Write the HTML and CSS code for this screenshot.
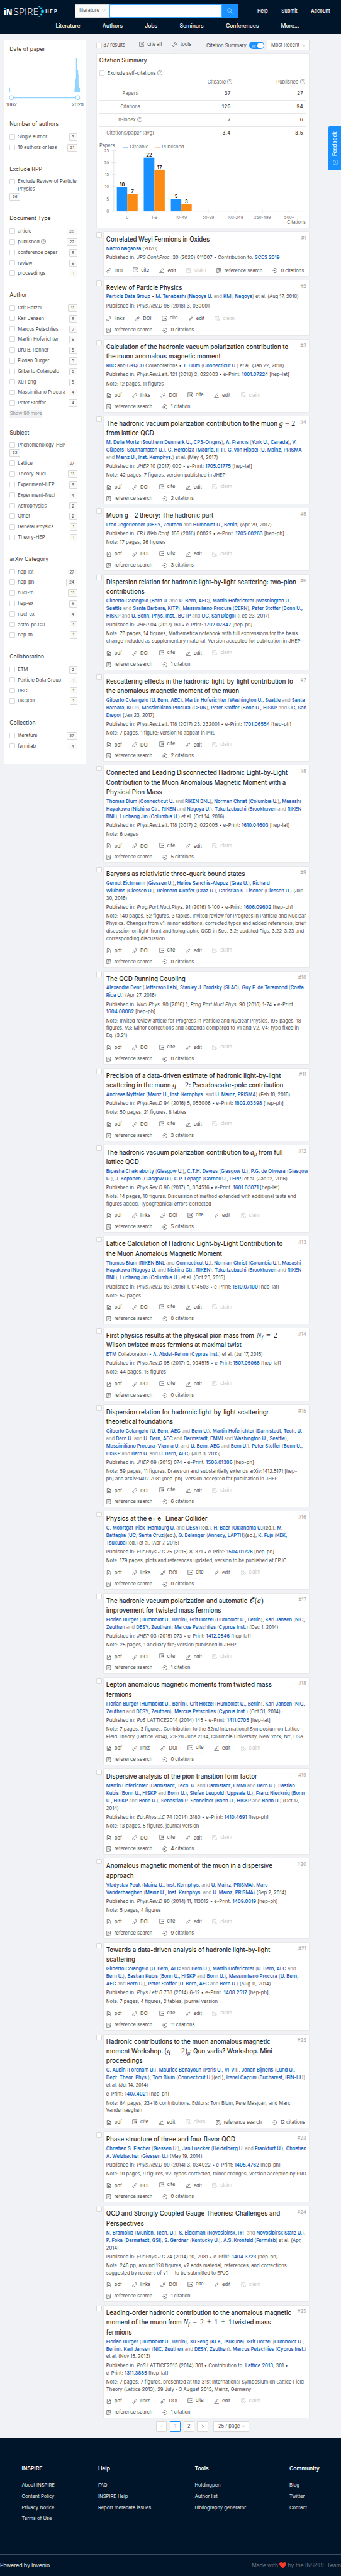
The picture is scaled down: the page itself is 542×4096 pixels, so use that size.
FILE: index.html
```html
<!DOCTYPE html>
<html lang="en">
<head>
<meta charset="utf-8">
<title>Literature Search - INSPIRE</title>
<link rel="stylesheet" href="styles.css">
</head>
<body>
<svg class="sprite" aria-hidden="true">
  <symbol id="i-pdf" viewBox="0 0 16 16"><path d="M2.5 1h7l4 4v10h-11zM9.5 1v4h4M5 12c2-1 3-3.500 3-5.500M8 8c.5 2 1.500 2.800 3.200 2.900M5 12c1.500-1.600 4-2 6.200-1.300"/></symbol>
  <symbol id="i-link" viewBox="0 0 16 16"><path d="M7 4.800l2.600-2.600a2.900 2.900 0 0 1 4.100 4.100L11 9M9 11.200l-2.600 2.600a2.900 2.900 0 0 1-4.100-4.100L5 7M5.700 10.300l4.600-4.600"/></symbol>
  <symbol id="i-cite" viewBox="0 0 16 16"><path d="M14.500 4V1.500H1.500v13h13V12M6 8h6"/><path class="solid" d="M11.500 5.800L15 8l-3.500 2.200z"/></symbol>
  <symbol id="i-edit" viewBox="0 0 16 16"><path d="M.5 15h15M4 9l7.500-7.500 2.500 2.500L6.500 11.500 3.300 12z"/></symbol>
  <symbol id="i-claim" viewBox="0 0 16 16"><path d="M7.500 15h-6V1h11.500v6M4 4.500h6.500M4 7.500h3.500"/><circle cx="11.500" cy="11.800" r="3.200"/><path d="M10 11.800l1.200 1.200 2-2.300"/></symbol>
  <symbol id="i-ref" viewBox="0 0 16 16"><path d="M7.500 15h-6V1h11.500v6M4 4.500h6.500M4 7.500h3.500M13 13.200l2 2"/><circle cx="11" cy="11" r="2.800"/></symbol>
  <symbol id="i-cits" viewBox="0 0 16 16"><path d="M3 3.500a6.800 6.800 0 1 1 0 9M0 8h7"/><path class="solid" d="M6.500 5.800L9.500 8l-3 2.200z"/></symbol>
  <symbol id="i-tool" viewBox="0 0 16 16"><path d="M14.500 4.200a4.200 4.200 0 0 1-5.700 5L4 14.300a1.600 1.600 0 0 1-2.300-2.300L6.800 7.200a4.200 4.200 0 0 1 5-5.700L9.600 3.800l.4 2.200 2.200.4z"/></symbol>
  <symbol id="i-help" viewBox="0 0 16 16"><circle cx="8" cy="8" r="7.300"/><path d="M5.800 6.300a2.200 2.200 0 1 1 3.300 1.900c-.8.500-1.100.8-1.100 1.600"/><circle class="solid" cx="8" cy="11.800" r=".7"/></symbol>
  <symbol id="i-down" viewBox="0 0 16 16"><path d="M2 3l6 9 6-9"/></symbol>
</svg>

<div class="page">
  <header class="header">
    <div class="header-top">
      <svg class="logo" width="160" height="54" viewBox="0 0 160 54">
        <text class="logo-bold" x="0" y="38" textLength="25" lengthAdjust="spacingAndGlyphs">ıN</text>
        <text class="logo-thin" x="28" y="38" textLength="74" lengthAdjust="spacingAndGlyphs">SPIRE</text>
        <g fill="#27d3f5" stroke="none"><circle cx="3.300" cy="20" r="2.300"/><circle cx="103.500" cy="14" r="1.600"/><circle cx="109.500" cy="18.500" r="2.700"/><circle cx="113.500" cy="27.500" r="4.500"/><circle cx="109.500" cy="37" r="2.700"/><circle cx="103.500" cy="42.500" r="1.600"/></g>
        <text class="logo-hep" x="122" y="32.500" textLength="34">HEP</text>
      </svg>
      <div class="search">
        <div class="search-scope">literature <svg class="caret"><use href="#i-down"/></svg></div>
        <div class="search-input"></div>
        <div class="search-button"><svg width="16" height="16" viewBox="0 0 16 16"><circle cx="6.500" cy="6.500" r="5.300"/><path d="M10.500 10.500l5 5"/></svg></div>
      </div>
      <nav class="user-nav"><span>Help</span><span>Submit</span><span>Account</span></nav>
    </div>
    <nav class="main-nav"><span class="active">Literature</span><span>Authors</span><span>Jobs</span><span>Seminars</span><span>Conferences</span><span>More...</span></nav>
  </header>

  <main class="content">
    <aside class="sidebar">
      <section class="facet facet-date">
        <h3>Date of paper</h3>
        <svg width="210" height="140" viewBox="0 0 210 140">
          <g fill="#91d5ff" stroke="none"><path d="M0 88h2v12.500H0zM191 88h2.500V62h1.500V0h4v37h2.500v12h1v26h2v13h2v12.500h-16z"/><rect x="6" y="114.500" width="194" height="4"/></g>
          <g fill="#fff" stroke="#91d5ff" stroke-width="2"><circle cx="6" cy="116.500" r="6"/><circle cx="200" cy="116.500" r="6"/></g>
          <g class="svg-text" text-anchor="middle"><text x="6" y="141.500">1862</text><text x="200" y="141.500">2020</text></g>
        </svg>
      </section>
      <div id="facets"></div>
    </aside>

    <div class="results">
      <div class="toolbar">
        <i class="box"></i><span class="count">37 results</span><i class="bar"></i>
        <span class="tool under cite-all"><svg class="icon"><use href="#i-cite"/></svg>cite all</span>
        <span class="tool under tools"><svg class="icon"><use href="#i-tool"/></svg>tools</span>
        <span class="summary-label">Citation Summary</span>
        <span class="switch"><svg width="12" height="12" viewBox="0 0 12 12"><path d="M.5 0v11H12M3 9.500V6M5.500 9.500V3.500M8 9.500V5M10.500 9.500V2"/></svg><i></i></span>
        <span class="sort">Most Recent <svg class="caret"><use href="#i-down"/></svg></span>
      </div>

      <section class="summary">
        <h2>Citation Summary</h2>
        <div class="exclude"><i class="box"></i>Exclude self-citations<svg class="help"><use href="#i-help"/></svg></div>
        <table class="stats">
          <tr class="stats-head"><td class="first"></td><td>Citeable<svg class="help"><use href="#i-help"/></svg></td><td>Published<svg class="help"><use href="#i-help"/></svg></td></tr>
          <tr><th>Papers</th><td>37</td><td>27</td></tr>
          <tr><th>Citations</th><td>126</td><td>94</td></tr>
          <tr><th>h-index<svg class="help"><use href="#i-help"/></svg></th><td>7</td><td>6</td></tr>
          <tr><th>Citations/paper (avg)</th><td>3.4</td><td>3.5</td></tr>
        </table>
        <svg class="chart" width="607" height="250" viewBox="291 412 607 250">
          <g stroke="#e6e6e9" stroke-width="2" fill="none"><path d="M333 440v180H887M327 442h12M327 477.700h12M327 513h12M327 548.500h12M327 584h12M327 620h12M372.500 614v12M451.700 614v12M531 614v12M610 614v12M689 614v12M768.500 614v12M847.500 614v12"/></g>
          <g fill="#1890ff" stroke="none"><rect x="342" y="548.500" width="30.500" height="72"/><rect x="421" y="463" width="31" height="157.500"/><rect x="500.500" y="584" width="30.500" height="36.500"/><rect x="361" y="431" width="14" height="2"/></g>
          <g fill="#fa8c16" stroke="none"><rect x="372.500" y="569.500" width="30.500" height="51"/><rect x="452" y="498.500" width="30.500" height="122"/><rect x="531" y="598.500" width="30.500" height="22"/><rect x="455" y="431" width="14" height="2"/></g>
          <g class="chart-label"><text x="291" y="432" textLength="45">Papers</text><text x="380" y="436" textLength="55">Citeable</text><text x="474" y="436" textLength="65">Published</text><text x="841" y="657" textLength="55">Citations</text></g>
          <g class="chart-tick" text-anchor="end"><text x="319" y="446.500">25</text><text x="319" y="482">20</text><text x="319" y="517.500">15</text><text x="319" y="553">10</text><text x="319" y="588.500">5</text><text x="319" y="624.500">0</text></g>
          <g class="chart-tick" text-anchor="middle"><text x="372.500" y="642.500">0</text><text x="452" y="642.500">1-9</text><text x="531" y="642.500">10-49</text><text x="610" y="642.500">50-99</text><text x="689" y="642.500">100-249</text><text x="768.500" y="642.500">250-499</text><text x="847.500" y="642.500">500+</text></g>
          <g class="chart-value" text-anchor="middle"><text x="358" y="546">10</text><text x="388" y="567.500">7</text><text x="436.500" y="460.500">22</text><text x="467" y="496.500">17</text><text x="516" y="581.500">5</text><text x="546" y="596.500">3</text></g>
        </svg>
      </section>

      <div id="list"></div>

      <div class="pager">
        <span class="off"><svg class="arrow" viewBox="0 0 16 16"><path d="M11 2L5 8l6 6"/></svg></span><span class="on">1</span><span>2</span><span><svg class="arrow" viewBox="0 0 16 16"><path d="M5 2l6 6-6 6"/></svg></span>
        <span class="size">25 / page <svg class="caret"><use href="#i-down"/></svg></span>
      </div>
    </div>
  </main>

  <footer class="footer">
    <div class="footer-cols">
      <div><h4>INSPIRE</h4><p>About INSPIRE</p><p>Content Policy</p><p>Privacy Notice</p><p>Terms of Use</p></div>
      <div><h4>Help</h4><p>FAQ</p><p>INSPIRE Help</p><p>Report metadata issues</p></div>
      <div><h4>Tools</h4><p>Holdingpen</p><p>Author list</p><p>Bibliography generator</p></div>
      <div><h4>Community</h4><p>Blog</p><p>Twitter</p><p>Contact</p></div>
    </div>
    <div class="footer-end"><span>Powered by Invenio</span><span class="made">Made with <svg class="heart" viewBox="0 0 20 18"><path d="M10 18C4 13 0 9.500 0 5.200 0 2 2.300 0 5 0c2 0 4 1.200 5 3 1-1.800 3-3 5-3 2.700 0 5 2 5 5.200C20 9.500 16 13 10 18z"/></svg> by the INSPIRE Team</span></div>
  </footer>

  <div class="feedback"><span>Feedback</span><svg width="16" height="16" viewBox="0 0 16 16"><path d="M14.800 15V8A6.900 6.900 0 1 0 8 14.800z"/><g class="solid"><circle cx="4.800" cy="8" r=".8"/><circle cx="8" cy="8" r=".8"/><circle cx="11.200" cy="8" r=".8"/></g></svg></div>
</div>
<script src="app.js"></script>
</body>
</html>
```

FILE: styles.css
```css
* { box-sizing: border-box; }
body { margin: 0; background: #f0f2f5; }
.sprite { display: none; }
.page {
  zoom: 0.54237;
  position: relative;
  width: 100%;
  height: 7552px;
  overflow: hidden;
  font: 14px/22px Inter, "Liberation Sans", sans-serif;
  color: rgba(0, 0, 0, 0.78);
  display: flex;
  flex-direction: column;
}
h2, h3, h4, p { margin: 0; font-weight: 500; }
svg { fill: none; stroke: currentColor; flex: none; }
svg text { stroke: none; }
.solid { fill: currentColor; stroke: none; }
.box { display: block; flex: none; width: 16px; height: 16px; border: 1px solid #d9d9d9; border-radius: 2px; background: #fff; }
.caret { width: 11px; height: 11px; color: #b0b0b0; stroke-width: 1.5; }
svg.help { width: 15px; height: 15px; margin-left: 4px; color: #555; vertical-align: -2px; }

/* header */
.header { height: 100px; background: #001529; color: #fff; flex: none; }
.header-top { display: flex; height: 64px; align-items: center; padding: 0 32px 0 11px; }
.logo { overflow: visible; }
.logo text { fill: #fff; font-family: "Open Sans", sans-serif; font-size: 27px; }
.logo .logo-bold { font-weight: 800; }
.logo .logo-thin { font-weight: 300; }
.logo .logo-hep { font-family: Inter, sans-serif; font-size: 13px; font-weight: 700; }
.search { display: flex; margin-left: 48px; height: 40px; width: 479px; }
.search-scope { width: 102px; padding: 0 10px 0 12px; background: #fafafa; border: 1px solid #d9d9d9; color: #555; display: flex; align-items: center; justify-content: space-between; border-radius: 2px 0 0 2px; }
.search-input { width: 330px; background: #fff; border: 1px solid #40a9ff; box-shadow: 0 0 0 2px rgba(24, 144, 255, 0.2); }
.search-button { width: 47px; background: #1890ff; display: flex; align-items: center; justify-content: center; }
.user-nav { display: flex; margin-left: auto; gap: 40px; padding-top: 2px; font-weight: 500; }
.main-nav { display: flex; gap: 65px; padding: 2px 0 0 163px; font-size: 16px; font-weight: 500; letter-spacing: -0.12px; }
.main-nav span { height: 23px; }
.main-nav .active { border-bottom: 2px solid #fff; }

/* layout */
.content { display: flex; height: 7046px; flex: none; }
.sidebar { width: 238px; height: 2124px; margin: 16px 32px 0 12px; padding: 16px 16px 0; background: #fff; flex: none; }
.results { width: 625px; padding-top: 16px; flex: none; }

/* facets */
.facet { padding-bottom: 36px; }
.facet h3 { font-size: 16px; line-height: 25px; font-weight: 400; letter-spacing: 0.1px; color: rgba(0, 0, 0, 0.85); margin-bottom: 8.600px; }
.facet-date { height: 221px; }
.facet-date svg { overflow: visible; display: block; margin-top: 12px; }
.svg-text text { fill: rgba(0, 0, 0, 0.78); }
.facet-row { display: flex; height: 31px; padding: 4.500px 8px 0 0; justify-content: space-between; align-items: flex-start; white-space: nowrap; letter-spacing: -0.07px; }
.facet-row .box { margin: 2px 8px 0 0; }
.option { display: flex; }
.facet-row.stacked { flex-direction: column; justify-content: flex-start; height: auto; padding-bottom: 5px; }
.tag { border: 1px solid #d9d9d9; border-radius: 2px; background: #fafafa; font-size: 12px; line-height: 18.500px; padding: 0 6.500px; height: 22px; letter-spacing: 0; }
.more { display: block; width: 96px; margin: 5px 0 -4px; background: #f0f2f5; color: rgba(0, 0, 0, 0.45); text-align: center; border-radius: 2px; letter-spacing: -0.2px; white-space: nowrap; }

/* toolbar */
.toolbar { display: flex; align-items: center; height: 32px; margin-bottom: 9px; white-space: nowrap; }
.toolbar > .box { margin-top: 3px; }
.count { margin-left: 5px; width: 80px; padding-top: 3px; letter-spacing: -0.1px; }
.bar { width: 1px; height: 13px; margin-top: 3px; background: #444; }
.tool { display: flex; align-items: center; gap: 9px; height: 34px; padding-bottom: 2px; }
.under { border-bottom: 1px solid #ebedf0; }
.cite-all { margin-left: 24px; width: 66px; }
.tools { margin-left: 31px; width: 56px; }
.summary-label { margin-left: 44px; width: 126px; padding-top: 5px; }
.switch { width: 44px; height: 22px; margin-top: 3px; border-radius: 11px; background: #1890ff; color: #fff; display: flex; align-items: center; justify-content: space-between; padding: 0 2px 0 7px; }
.switch i { width: 18px; height: 18px; border-radius: 9px; background: #fff; }
.sort { margin-left: auto; width: 125px; height: 32px; border: 1px solid #d9d9d9; background: #fff; border-radius: 2px; padding: 0 10px 0 11px; display: flex; align-items: center; justify-content: space-between; }
.icon { width: 15px; height: 15px; stroke-width: 1.2; }

/* citation summary */
.summary { height: 512px; background: #fff; border: 1px solid #e8e8e8; border-radius: 2px; padding: 6px 7px; overflow: hidden; }
.summary h2 { font-size: 16px; line-height: 28px; letter-spacing: 0.25px; color: rgba(0, 0, 0, 0.85); }
.exclude { display: flex; align-items: center; margin-top: 11px; }
.exclude .box { margin-right: 8px; }
.stats { width: 607px; border-collapse: collapse; table-layout: fixed; margin-top: 1px; color: rgba(0, 0, 0, 0.65); }
.stats td, .stats th { height: 39px; padding: 0 9px 0 0; border-bottom: 1px solid #e6e6e9; text-align: right; }
.stats tr:last-child > * { border: 0; }
.stats .first { width: 182px; }
.stats th { width: 182px; text-align: center; padding: 0; font-weight: 400; }
.stats td { font-weight: 600; letter-spacing: 0.7px; color: rgba(0, 0, 0, 0.75); }
.stats .stats-head td { height: 28px; border: 0; padding-right: 4px; font-weight: 400; letter-spacing: 0; color: rgba(0, 0, 0, 0.65); }
.chart { display: block; }
.chart-label text { fill: rgba(0, 0, 0, 0.65); }
.chart-tick text { fill: rgba(0, 0, 0, 0.65); font-size: 11.700px; }
.chart-value text { fill: #000; font-size: 13.500px; font-weight: 600; }

/* result cards */
.result { display: flex; margin-top: 9.400px; }
.result > .box { margin: 2.500px 4.500px 0 0; }
.card { width: 604px; background: #fff; border: 1px solid #e8e8e8; border-radius: 2px; padding: 7.200px 7px 0; white-space: nowrap; letter-spacing: 0.05px; }
.head { display: flex; justify-content: space-between; }
.title { font-size: 18px; line-height: 28.280px; font-weight: 500; letter-spacing: -0.11px; color: rgba(0, 0, 0, 0.88); }
.number { color: #aaa; font-weight: 500; }
.line { margin-top: 4px; }
.published { letter-spacing: 0.085px; }
.authors { margin-top: 3px; letter-spacing: -0.04px; }
.card a { color: #0050b3; font-weight: 500; }
.dim { color: rgba(0, 0, 0, 0.5); }
.math { display: inline-block; font: 22px/20px "Liberation Serif", serif; letter-spacing: 0; word-spacing: 1px; text-align: center; white-space: nowrap; }
.math.wide { word-spacing: 3.500px; }
.math sub { font-size: 16px; line-height: 0; vertical-align: -4px; }
.script { margin-right: 2px; font-size: 20px; }
.actions { margin: 6.700px 0 -1.700px; letter-spacing: -0.07px; }
.actions.loose { margin-top: 10.700px; }
.row { display: flex; gap: 30px; height: 32.900px; align-items: center; }
.act { display: flex; gap: 9px; align-items: center; }
.act.cite { height: 32.500px; padding-bottom: 2px; border-bottom: 1px solid #fafafa; }
.act.claim { color: #c2c2c2; padding-bottom: 2px; }

/* pagination */
.pager { display: flex; gap: 8.500px; margin: 9px 0 0 176px; }
.pager span { width: 31.500px; height: 32px; border: 1px solid #d9d9d9; border-radius: 2px; background: #fff; display: flex; align-items: center; justify-content: center; white-space: nowrap; }
.pager .on { border-color: #1890ff; color: #1890ff; font-weight: 500; }
.pager .off { color: #bbb; }
.pager .size { width: 105px; margin-left: 8px; justify-content: space-between; padding: 0 10px 0 12px; }
.arrow { width: 12px; height: 12px; stroke-width: 1.500px; }

/* footer */
.footer { flex: 1; background: #001529; color: #e6e8ea; }
.footer-cols { display: grid; grid-template-columns: 224px 283px 277.500px 1fr; padding: 80px 0 0 63.500px; height: 341px; white-space: nowrap; }
.footer-cols h4 { font-size: 16px; line-height: 25px; margin-bottom: 24px; color: #fff; font-weight: 600; letter-spacing: -0.12px; }
.footer-cols p { height: 33px; font-weight: 400; }
.footer-end { border-top: 1px solid #3c4c5e; display: flex; justify-content: space-between; padding-top: 22px; font-size: 16px; letter-spacing: -0.13px; }
.made { color: #66737f; }
.heart { width: 20px; height: 18px; vertical-align: -3px; stroke: none; fill: #f5392a; }

.feedback { position: absolute; right: 0; top: 370px; width: 36px; height: 130px; background: #1890ff; color: #fff; border-radius: 3px 0 0 3px; display: flex; flex-direction: column; align-items: center; justify-content: space-between; padding: 15px 0 16px 4px; }
.feedback span { writing-mode: vertical-rl; transform: rotate(180deg); font-size: 15.500px; font-weight: 500; }
.feedback svg { transform: rotate(-90deg); }
```

FILE: app.js
```js
// Facets: [title, rows, "show more" label]; a row is [label, count, option]
const facets = [
  ['Number of authors', [['Single author', 3], ['10 authors or less', 31]]],
  ['Exclude RPP', [['Exclude Review of Particle<br>Physics', 36, 'stacked']]],
  ['Document Type', [['article', 28], ['published', 27, 'hint'], ['conference paper', 8], ['review', 6], ['proceedings', 1]]],
  ['Author', [['Grit Hotzel', 11], ['Karl Jansen', 8], ['Marcus Petschlies', 7], ['Martin Hoferichter', 6], ['Dru B. Renner', 5], ['Florian Burger', 5], ['Gilberto Colangelo', 5], ['Xu Feng', 5], ['Massimiliano Procura', 4], ['Peter Stoffer', 4]], 'Show 90 more'],
  ['Subject', [['Phenomenology-HEP', 33, 'stacked'], ['Lattice', 27], ['Theory-Nucl', 11], ['Experiment-HEP', 9], ['Experiment-Nucl', 4], ['Astrophysics', 2], ['Other', 2], ['General Physics', 1], ['Theory-HEP', 1]]],
  ['arXiv Category', [['hep-lat', 27], ['hep-ph', 24], ['nucl-th', 11], ['hep-ex', 8], ['nucl-ex', 4], ['astro-ph.CO', 1], ['hep-th', 1]]],
  ['Collaboration', [['ETM', 2], ['Particle Data Group', 1], ['RBC', 1], ['UKQCD', 1]]],
  ['Collection', [['literature', 37], ['fermilab', 4]]]
];

const icon = (name, cls = 'icon') => `<svg class="${cls}"><use href="#i-${name}"/></svg>`;

document.getElementById('facets').innerHTML = facets.map(([title, rows, more]) => `
  <section class="facet"><h3>${title}</h3>
  ${rows.map(([label, n, opt]) => `<div class="facet-row ${opt || ''}"><span class="option"><i class="box"></i><span>${label}${opt === 'hint' ? icon('help', 'help') : ''}</span></span><span class="tag">${n}</span></div>`).join('')}
  ${more ? `<span class="more">${more}</span>` : ''}</section>`).join('');

const math = (width, html, cls = '') => `<span class="math ${cls}" style="width:${width}px">${html}</span>`;

// Papers: [title, authors, publication, note, actions, citations, actions on one row]
// "|" breaks a line, *x* is a link, ~x~ is a journal name
const papers = [
  ['Correlated Weyl Fermions in Oxides', '*Naoto Nagaosa* (2020)', 'Published in: ~JPS Conf.Proc.~ 30 (2020) 011007 • Contribution to: *SCES 2019*', '', 'D', '0 citations', 1],
  ['Review of Particle Physics', '*Particle Data Group* • *M. Tanabashi* (*Nagoya U.* and *KMI, Nagoya*) et al. (Aug 17, 2018)', 'Published in: ~Phys.Rev.D~ 98 (2018) 3, 030001', '', 'LD', '0 citations'],
  ['Calculation of the hadronic vacuum polarization contribution to|the muon anomalous magnetic moment', '*RBC* {and} *UKQCD* Collaborations • *T. Blum* (*Connecticut U.*) et al. (Jan 22, 2018)', 'Published in: ~Phys.Rev.Lett.~ 121 (2018) 2, 022003 • e-Print: *1801.07224* [hep-lat]', '12 pages, 11 figures', 'PLD', '1 citation'],
  ['The hadronic vacuum polarization contribution to the muon ' + math(47, '<i>g</i> − 2') + '|from lattice QCD', '*M. Della Morte* (*Southern Denmark U., CP3-Origins*), *A. Francis* (*York U., Canada*), *V.|Gülpers* (*Southampton U.*), *G. Herdoíza* (*Madrid, IFT*), *G. von Hippel* (*U. Mainz, PRISMA*|and *Mainz U., Inst. Kernphys.*) et al. (May 4, 2017)', 'Published in: ~JHEP~ 10 (2017) 020 • e-Print: *1705.01775* [hep-lat]', '42 pages, 7 figures, version published in JHEP', 'PD', '2 citations'],
  ['Muon g – 2 theory: The hadronic part', '*Fred Jegerlehner* (*DESY, Zeuthen* and *Humboldt U., Berlin*) (Apr 29, 2017)', 'Published in: ~EPJ Web Conf.~ 166 (2018) 00022 • e-Print: *1705.00263* [hep-ph]', '17 pages, 26 figures', 'PD', '3 citations'],
  ['Dispersion relation for hadronic light-by-light scattering: two-pion|contributions', '*Gilberto Colangelo* (*Bern U.* and *U. Bern, AEC*), *Martin Hoferichter* (*Washington U.,|Seattle* and *Santa Barbara, KITP*), *Massimiliano Procura* (*CERN*), *Peter Stoffer* (*Bonn U.,|HISKP* and *U. Bonn, Phys. Inst., BCTP* and *UC, San Diego*) (Feb 23, 2017)', 'Published in: ~JHEP~ 04 (2017) 161 • e-Print: *1702.07347* [hep-ph]', '70 pages, 14 figures, Mathematica notebook with full expressions for the basis|change included as supplementary material. Version accepted for publication in JHEP', 'PD', '1 citation'],
  ['Rescattering effects in the hadronic-light-by-light contribution to|the anomalous magnetic moment of the muon', '*Gilberto Colangelo* (*U. Bern, AEC*), *Martin Hoferichter* (*Washington U., Seattle* and *Santa|Barbara, KITP*), *Massimiliano Procura* (*CERN*), *Peter Stoffer* (*Bonn U., HISKP* and *UC, San|Diego*) (Jan 23, 2017)', 'Published in: ~Phys.Rev.Lett.~ 118 (2017) 23, 232001 • e-Print: *1701.06554* [hep-ph]', '7 pages, 1 figure; version to appear in PRL', 'PD', '2 citations'],
  ['Connected and Leading Disconnected Hadronic Light-by-Light|Contribution to the Muon Anomalous Magnetic Moment with a|Physical Pion Mass', '*Thomas Blum* (*Connecticut U.* and *RIKEN BNL*), *Norman Christ* (*Columbia U.*), *Masashi|Hayakawa* (*Nishina Ctr., RIKEN* and *Nagoya U.*), *Taku Izubuchi* (*Brookhaven* and *RIKEN|BNL*), *Luchang Jin* (*Columbia U.*) et al. (Oct 14, 2016)', 'Published in: ~Phys.Rev.Lett.~ 118 (2017) 2, 022005 • e-Print: *1610.04603* [hep-lat]', '6 pages', 'PD', '5 citations'],
  ['Baryons as relativistic three-quark bound states', '*Gernot Eichmann* (*Giessen U.*), *Helios Sanchis-Alepuz* (*Graz U.*), *Richard|Williams* (*Giessen U.*), *Reinhard Alkofer* (*Graz U.*), *Christian S. Fischer* (*Giessen U.*) (Jun|30, 2016)', 'Published in: ~Prog.Part.Nucl.Phys.~ 91 (2016) 1-100 • e-Print: *1606.09602* [hep-ph]', '140 pages, 52 figures, 3 tables. Invited review for Progress in Particle and Nuclear|Physics. Changes from v1: minor additions, corrected typos and added references; brief|discussion on light-front and holographic QCD in Sec. 3.2; updated Figs. 3.22-3.23 and|corresponding discussion', 'PD', '0 citations'],
  ['The QCD Running Coupling', '*Alexandre Deur* (*Jefferson Lab*), *Stanley J. Brodsky* (*SLAC*), *Guy F. de Teramond* (*Costa|Rica U.*) (Apr 27, 2016)', 'Published in: ~Nucl.Phys.~ 90 (2016) 1, ~Prog.Part.Nucl.Phys.~ 90 (2016) 1-74 • e-Print:|*1604.08082* [hep-ph]', 'Invited review article for Progress in Particle and Nuclear Physics. 195 pages, 18|figures. V3: Minor corrections and addenda compared to V1 and V2. V4: typo fixed in|Eq. (3.21)', 'PD', '0 citations'],
  ['Precision of a data-driven estimate of hadronic light-by-light|scattering in the muon ' + math(48, '<i>g</i> − 2') + ': Pseudoscalar-pole contribution', '*Andreas Nyffeler* (*Mainz U., Inst. Kernphys.* and *U. Mainz, PRISMA*) (Feb 10, 2016)', 'Published in: ~Phys.Rev.D~ 94 (2016) 5, 053006 • e-Print: *1602.03398* [hep-ph]', '50 pages, 21 figures, 8 tables', 'PD', '3 citations'],
  ['The hadronic vacuum polarization contribution to ' + math(20, '<i>a<sub>μ</sub></i>') + ' from full|lattice QCD', '*Bipasha Chakraborty* (*Glasgow U.*), *C.T.H. Davies* (*Glasgow U.*), *P.G. de Oliviera* (*Glasgow|U.*), *J. Koponen* (*Glasgow U.*), *G.P. Lepage* (*Cornell U., LEPP*) et al. (Jan 12, 2016)', 'Published in: ~Phys.Rev.D~ 96 (2017) 3, 034516 • e-Print: *1601.03071* [hep-lat]', '14 pages, 10 figures. Discussion of method extended with additional tests and|figures added. Typographical errors corrected', 'PLD', '5 citations'],
  ['Lattice Calculation of Hadronic Light-by-Light Contribution to|the Muon Anomalous Magnetic Moment', '*Thomas Blum* (*RIKEN BNL* and *Connecticut U.*), *Norman Christ* (*Columbia U.*), *Masashi|Hayakawa* (*Nagoya U.* and *Nishina Ctr., RIKEN*), *Taku Izubuchi* (*Brookhaven* and *RIKEN|BNL*), *Luchang Jin* (*Columbia U.*) et al. (Oct 23, 2015)', 'Published in: ~Phys.Rev.D~ 93 (2016) 1, 014503 • e-Print: *1510.07100* [hep-lat]', '52 pages', 'PD', '8 citations'],
  ['First physics results at the physical pion mass from ' + math(66, '<i>N<sub>f</sub></i> = 2', 'wide') + '|Wilson twisted mass fermions at maximal twist', '*ETM* Collaboration • *A. Abdel-Rehim* (*Cyprus Inst.*) et al. (Jul 17, 2015)', 'Published in: ~Phys.Rev.D~ 95 (2017) 9, 094515 • e-Print: *1507.05068* [hep-lat]', '44 pages, 15 figures', 'PD', '0 citations'],
  ['Dispersion relation for hadronic light-by-light scattering:|theoretical foundations', '*Gilberto Colangelo* (*U. Bern, AEC* and *Bern U.*), *Martin Hoferichter* (*Darmstadt, Tech. U.*|and *Bern U.* and *U. Bern, AEC* and *Darmstadt, EMMI* and *Washington U., Seattle*),|*Massimiliano Procura* (*Vienna U.* and *U. Bern, AEC* and *Bern U.*), *Peter Stoffer* (*Bonn U.,|HISKP* and *Bern U.* and *U. Bern, AEC*) (Jun 3, 2015)', 'Published in: ~JHEP~ 09 (2015) 074 • e-Print: *1506.01386* [hep-ph]', '59 pages, 11 figures. Draws on and substantially extends arXiv:1412.5171 [hep-|ph] and arXiv:1402.7081 [hep-ph]. Version accepted for publication in JHEP', 'PD', '6 citations'],
  ['Physics at the e+ e- Linear Collider', '*G. Moortgat-Pick* (*Hamburg U.* and *DESY*)(ed.), *H. Baer* (*Oklahoma U.*)(ed.), *M.|Battaglia* (*UC, Santa Cruz*)(ed.), *G. Belanger* (*Annecy, LAPTH*)(ed.), *K. Fujii* (*KEK,|Tsukuba*)(ed.) et al. (Apr 7, 2015)', 'Published in: ~Eur.Phys.J.C~ 75 (2015) 8, 371 • e-Print: *1504.01726* [hep-ph]', '179 pages, plots and references updated, version to be published at EPJC', 'PLD', '0 citations'],
  ['The hadronic vacuum polarization and automatic ' + math(44, '<span class="script">𝒪</span>(<i>a</i>)') + '|improvement for twisted mass fermions', '*Florian Burger* (*Humboldt U., Berlin*), *Grit Hotzel* (*Humboldt U., Berlin*), *Karl Jansen* (*NIC,|Zeuthen* and *DESY, Zeuthen*), *Marcus Petschlies* (*Cyprus Inst.*) (Dec 1, 2014)', 'Published in: ~JHEP~ 03 (2015) 073 • e-Print: *1412.0546* [hep-lat]', '25 pages, 1 ancillary file; version published in JHEP', 'PD', '1 citation'],
  ['Lepton anomalous magnetic moments from twisted mass|fermions', '*Florian Burger* (*Humboldt U., Berlin*), *Grit Hotzel* (*Humboldt U., Berlin*), *Karl Jansen* (*NIC,|Zeuthen* and *DESY, Zeuthen*), *Marcus Petschlies* (*Cyprus Inst.*) (Oct 31, 2014)', 'Published in: ~PoS~ LATTICE2014 (2014) 145 • e-Print: *1411.0705* [hep-lat]', '7 pages, 3 figures, Contribution to the 32nd International Symposium on Lattice|Field Theory (Lattice 2014), 23-28 June 2014, Columbia University, New York, NY, USA', 'PLD', '0 citations'],
  ['Dispersive analysis of the pion transition form factor', '*Martin Hoferichter* (*Darmstadt, Tech. U.* and *Darmstadt, EMMI* and *Bern U.*), *Bastian|Kubis* (*Bonn U., HISKP* and *Bonn U.*), *Stefan Leupold* (*Uppsala U.*), *Franz Niecknig* (*Bonn|U., HISKP* and *Bonn U.*), *Sebastian P. Schneider* (*Bonn U., HISKP* and *Bonn U.*) (Oct 17,|2014)', 'Published in: ~Eur.Phys.J.C~ 74 (2014) 3180 • e-Print: *1410.4691* [hep-ph]', '13 pages, 5 figures, journal version', 'PD', '4 citations'],
  ['Anomalous magnetic moment of the muon in a dispersive|approach', '*Vladyslav Pauk* (*Mainz U., Inst. Kernphys.* and *U. Mainz, PRISMA*), *Marc|Vanderhaeghen* (*Mainz U., Inst. Kernphys.* and *U. Mainz, PRISMA*) (Sep 2, 2014)', 'Published in: ~Phys.Rev.D~ 90 (2014) 11, 113012 • e-Print: *1409.0819* [hep-ph]', '5 pages, 4 figures', 'PD', '9 citations'],
  ['Towards a data-driven analysis of hadronic light-by-light|scattering', '*Gilberto Colangelo* (*U. Bern, AEC* and *Bern U.*), *Martin Hoferichter* (*U. Bern, AEC* and|*Bern U.*), *Bastian Kubis* (*Bonn U., HISKP* and *Bonn U.*), *Massimiliano Procura* (*U. Bern,|AEC* and *Bern U.*), *Peter Stoffer* (*U. Bern, AEC* and *Bern U.*) (Aug 11, 2014)', 'Published in: ~Phys.Lett.B~ 738 (2014) 6-12 • e-Print: *1408.2517* [hep-ph]', '7 pages, 4 figures, 2 tables, journal version', 'PD', '11 citations'],
  ['Hadronic contributions to the muon anomalous magnetic|moment Workshop. ' + math(74, '(<i>g</i> − 2)<sub><i>μ</i></sub>', 'wide') + ': Quo vadis? Workshop. Mini|proceedings', '*C. Aubin* (*Fordham U.*), *Maurice Benayoun* (*Paris U., VI-VII*), *Johan Bijnens* (*Lund U.,|Dept. Theor. Phys.*), *Tom Blum* (*Connecticut U.*)(ed.), *Irenel Caprini* (*Bucharest, IFIN-HH*)|et al. (Jul 14, 2014)', 'e-Print: *1407.4021* [hep-ph]', '84 pages, 23+18 contributions. Editors: Tom Blum, Pere Masjuan, and Marc|Vanderhaeghen', 'P', '12 citations', 1],
  ['Phase structure of three and four flavor QCD', '*Christian S. Fischer* (*Giessen U.*), *Jan Luecker* (*Heidelberg U.* and *Frankfurt U.*), *Christian|A. Welzbacher* (*Giessen U.*) (May 19, 2014)', 'Published in: ~Phys.Rev.D~ 90 (2014) 3, 034022 • e-Print: *1405.4762* [hep-ph]', '10 pages, 9 figures, v2: typos corrected, minor changes, version accepted by PRD', 'PD', '0 citations'],
  ['QCD and Strongly Coupled Gauge Theories: Challenges and|Perspectives', '*N. Brambilla* (*Munich, Tech. U.*), *S. Eidelman* (*Novosibirsk, IYF* and *Novosibirsk State U.*),|*P. Foka* (*Darmstadt, GSI*), *S. Gardner* (*Kentucky U.*), *A.S. Kronfeld* (*Fermilab*) et al. (Apr,|2014)', 'Published in: ~Eur.Phys.J.C~ 74 (2014) 10, 2981 • e-Print: *1404.3723* [hep-ph]', '246 pp, around 128 figures; v2 adds material, references, and corrections|suggested by readers of v1 -- to be submitted to EPJC', 'PLD', '1 citation'],
  ['Leading-order hadronic contribution to the anomalous magnetic|moment of the muon from ' + math(140, '<i>N<sub>f</sub></i> = 2 + 1 + 1', 'wide') + ' twisted mass|fermions', '*Florian Burger* (*Humboldt U., Berlin*), *Xu Feng* (*KEK, Tsukuba*), *Grit Hotzel* (*Humboldt U.,|Berlin*), *Karl Jansen* (*NIC, Zeuthen* and *DESY, Zeuthen*), *Marcus Petschlies* (*Cyprus Inst.*)|et al. (Nov 15, 2013)', 'Published in: ~PoS~ LATTICE2013 (2014) 301 • Contribution to: *Lattice 2013*, 301 •|e-Print: *1311.3885* [hep-lat]', '7 pages, 7 figures, presented at the 31st International Symposium on Lattice Field|Theory (Lattice 2013), 29 July - 3 August 2013, Mainz, Germany', 'PLD', '1 citation']
];

const lines = s => s.replace(/\|/g, '<br>');
const rich = s => lines(s).replace(/\*([^*]+)\*/g, '<a>$1</a>').replace(/~([^~]+)~/g, '<em>$1</em>');
const people = s => rich(s
  .replace(/\band\b(?!})/g, '<span class="dim">and</span>')
  .replace(/[{}]/g, '')
  .replace(/\(\*/g, '<span class="dim">(</span>*')
  .replace(/\*\)/g, '*<span class="dim">)</span>'));

const act = (name, text, cls = '') => `<span class="act ${cls}">${icon(name)}${text}</span>`;
const kinds = { P: ['pdf', 'pdf'], L: ['link', 'links'], D: ['link', 'DOI'] };

document.getElementById('list').innerHTML = papers.map(([title, authors, pub, note, acts, cites, single], i) => {
  const first = [...acts].map(k => act(...kinds[k])).join('') + act('cite', 'cite', 'cite') + act('edit', 'edit') + act('claim', 'claim', 'claim');
  const second = act('ref', 'reference search') + act('cits', cites);
  return `<article class="result"><i class="box"></i><div class="card">
    <div class="head"><div class="title">${lines(title)}</div><span class="number">#${i + 1}</span></div>
    <div class="authors">${people(authors)}</div>
    <div class="line published">${rich(pub)}</div>
    ${note ? `<div class="line">Note: ${lines(note)}</div>` : ''}
    <div class="actions${note ? '' : ' loose'}"><div class="row">${first}${single ? second : ''}</div>${single ? '' : `<div class="row">${second}</div>`}</div>
  </div></article>`;
}).join('');
```
